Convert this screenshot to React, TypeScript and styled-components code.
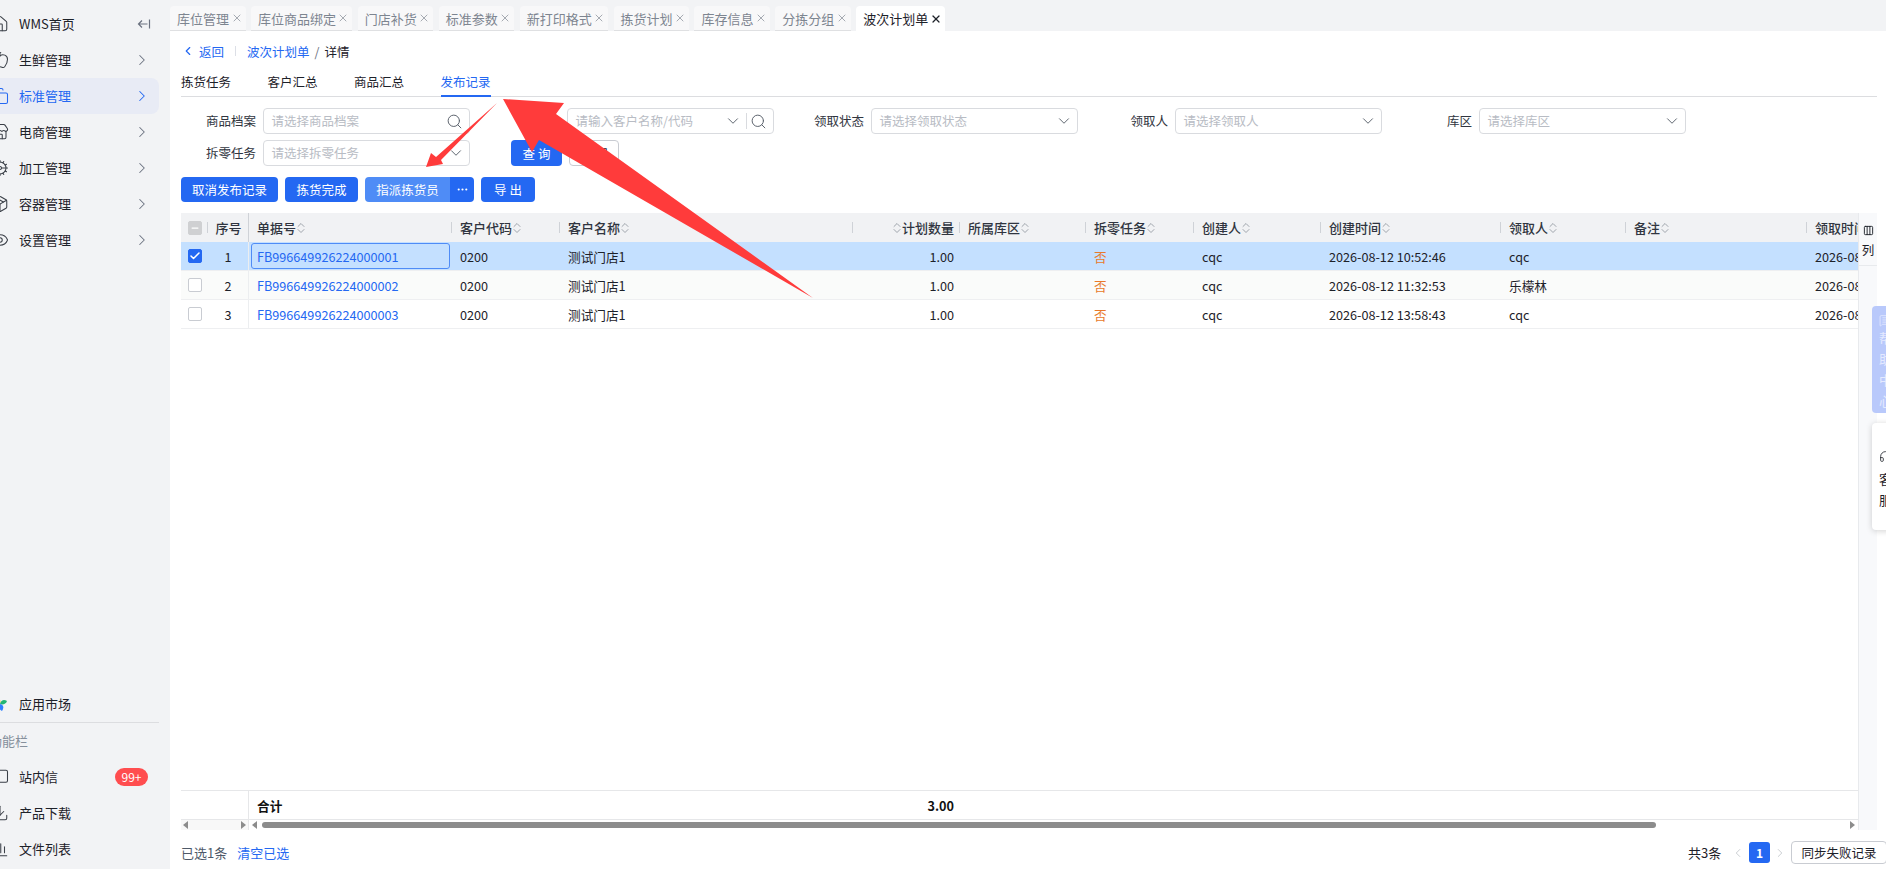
import React from "react";
import styled, { createGlobalStyle } from "styled-components";
import {
  Home, Apple, Copy, Store, Cog, Package, Eye, MessageSquare, Download, BarChart3,
  ChevronRight, ChevronLeft, ChevronDown, ChevronUp, Search, X, Check, Minus, MoreHorizontal,
  Columns3, MessageSquareText, Headphones,
} from "lucide-react";

const BLUE = "#2468f2";
const FONT = `"Noto Sans CJK SC", "Noto Sans", sans-serif`;

const Global = createGlobalStyle`
  html, body { margin: 0; padding: 0; height: 100%; overflow: hidden; background: #fff; }
  body { font-family: ${FONT}; font-size: 12px; color: #1d2129; }
  #root { height: 100%; }
  * { box-sizing: border-box; }
`;

const Shell = styled.div`
  display: flex;
  width: 1886px;
  height: 869px;
  overflow: hidden;
  position: relative;
`;

/* ---------- sidebar ---------- */
const Sidebar = styled.aside`
  width: 170px;
  flex: none;
  background: #f2f3f5;
  display: flex;
  flex-direction: column;
  justify-content: space-between;
  overflow: hidden;
`;
const MenuGroup = styled.nav`
  display: flex;
  flex-direction: column;
  padding-top: ${(p: { $top?: boolean }) => (p.$top ? "6px" : "0")};
  padding-bottom: ${(p: { $top?: boolean }) => (p.$top ? "0" : "2px")};
`;
const MenuText = styled.span`
  margin-bottom: 2px;
`;
const MenuItem = styled.div<{ $active?: boolean }>`
  width: 159px;
  height: 36px;
  display: flex;
  align-items: center;
  gap: 10px;
  font-size: 13px;
  color: ${(p) => (p.$active ? BLUE : "#1d2129")};
  background: ${(p) => (p.$active ? "#e8ebf5" : "transparent")};
  border-radius: 0 8px 8px 0;
  & > svg:first-child { margin-left: -9px; flex: none; color: ${(p) => (p.$active ? BLUE : "#3a3f47")}; }
`;
const MenuArrow = styled.span<{ $active?: boolean }>`
  margin-left: auto;
  margin-right: 8px;
  display: flex;
  color: ${(p) => (p.$active ? BLUE : "#6b7280")};
`;
const Divider = styled.div`
  width: 159px;
  height: 1px;
  background: #dcdde0;
`;
const GroupTitle = styled.div`
  height: 36px;
  display: flex;
  align-items: center;
  margin-left: -11px;
  font-size: 13px;
  color: #86909c;
`;
const Badge = styled.span`
  margin-left: auto;
  margin-right: 11px;
  width: 33px;
  height: 18px;
  border-radius: 9px;
  background: #ff4d4f;
  color: #fff;
  font-size: 12px;
  line-height: 18px;
  text-align: center;
`;

/* ---------- main ---------- */
const Main = styled.main`
  flex: 1;
  min-width: 0;
  display: flex;
  flex-direction: column;
`;
const TabBar = styled.div`
  height: 31px;
  flex: none;
  padding-top: 6px;
  background: #f2f3f5;
  display: flex;
  gap: 5.4px;
`;
const Tab = styled.div<{ $active?: boolean }>`
  height: 25px;
  padding: 0 5px 0 7px;
  display: flex;
  align-items: center;
  gap: 3.5px;
  font-size: 13px;
  border-radius: 4px 4px 0 0;
  background: ${(p) => (p.$active ? "#fff" : "#f8f8f9")};
  color: ${(p) => (p.$active ? "#1d2129" : "#7d8590")};
  border-bottom: ${(p) => (p.$active ? "none" : "1px solid #dfe0e2")};
  svg { margin: 0 -2px; color: ${(p) => (p.$active ? "#1d2129" : "#8a9099")}; }
`;
const Content = styled.div`
  flex: 1;
  min-height: 0;
  display: flex;
  flex-direction: column;
  padding: 0 9px 0 11px;
`;
const Crumbs = styled.div`
  margin-top: 8px;
  height: 24px;
  margin-bottom: 1px;
  display: flex;
  align-items: center;
  font-size: 12.5px;
  color: #1d2129;
`;
const CrumbLink = styled.span`
  color: ${BLUE};
  display: inline-flex;
  align-items: center;
`;
const CrumbSep = styled.span`
  width: 1px;
  height: 10px;
  background: #dcdfe6;
  margin: 0 11px;
`;
const Slash = styled.span`
  margin: 0 5px;
  color: #6b7280;
`;
const DetailTabs = styled.div`
  height: 33px;
  display: flex;
  gap: 36.5px;
  border-bottom: 1px solid #dcdde0;
`;
const DetailTab = styled.div<{ $active?: boolean }>`
  height: 33px;
  line-height: 36px;
  font-size: 12.5px;
  width: 50px;
  white-space: nowrap;
  color: ${(p) => (p.$active ? BLUE : "#1d2129")};
  border-bottom: 2px solid ${(p) => (p.$active ? BLUE : "transparent")};
`;
const Filters = styled.div`
  margin-top: 11px;
  display: grid;
  grid-template-columns: repeat(5, 304px);
  grid-auto-rows: 26px;
  row-gap: 6px;
`;
const Field = styled.div`
  display: grid;
  grid-template-columns: 75px 207px;
  column-gap: 7px;
  align-items: center;
`;
const FieldLabel = styled.label`
  text-align: right;
  font-size: 12.5px;
  color: #303540;
  white-space: nowrap;
  margin-bottom: 2px;
`;
const Input = styled.div`
  height: 26px;
  border: 1px solid #d9dbdf;
  border-radius: 4px;
  display: flex;
  align-items: center;
  padding: 0 8px 0 7.5px;
  background: #fff;
  color: #5c636d;
`;
const Placeholder = styled.span`
  flex: 1;
  font-size: 12.5px;
  color: #b8bcc4;
  white-space: nowrap;
  margin-bottom: 2px;
`;
const InputSep = styled.span`
  width: 1px;
  height: 16px;
  background: #d9dbdf;
  margin: 0 5px 0 8px;
`;
const SearchGlyph = styled(Search)`
  flex: none;
  margin: 0 -2px;
`;
const DownGlyph = styled(ChevronDown)`
  flex: none;
  margin: 0 -4px;
`;
const QueryCell = styled.div`
  display: flex;
  gap: 7px;
  padding-left: 26px;
`;
const Btn = styled.button<{ $w?: number; $light?: boolean; $ghost?: boolean; $square?: string }>`
  width: ${(p) => (p.$w ? `${p.$w}px` : "auto")};
  height: 100%;
  border: ${(p) => (p.$ghost ? "1px solid #c9ccd2" : "none")};
  border-radius: ${(p) => p.$square ?? "4px"};
  background: ${(p) => (p.$ghost ? "#fff" : p.$light ? "#4f8cf6" : BLUE)};
  color: ${(p) => (p.$ghost ? "#1d2129" : "#fff")};
  font: 12.5px ${FONT};
  padding: 0;
  display: inline-flex;
  align-items: center;
  justify-content: center;
`;
const Actions = styled.div`
  margin-top: 11px;
  height: 25px;
  display: flex;
  gap: 7px;
`;
const SplitBtn = styled.div`
  display: flex;
`;
const TableWrap = styled.div`
  margin-top: 11px;
  flex: 1;
  min-height: 0;
  display: flex;
`;
const Table = styled.div`
  flex: 1;
  min-width: 0;
  display: flex;
  flex-direction: column;
  overflow: hidden;
`;
const COLS = "27px 41px 203px 108px 293px 107px 126px 108px 127px 180px 125px 181px 180px";
const HeadRow = styled.div`
  height: 29px;
  flex: none;
  display: grid;
  grid-template-columns: ${COLS};
  background: #f1f2f4;
  font-weight: 500;
`;
const HeadCell = styled.div<{ $end?: boolean; $noSep?: boolean; $pin?: boolean }>`
  position: relative;
  display: flex;
  align-items: center;
  justify-content: ${(p) => (p.$end ? "flex-end" : "flex-start")};
  padding: ${(p) => (p.$end ? "0 6px 0 0" : "0 0 0 8px")};
  font-size: 13px;
  white-space: nowrap;
  color: #303540;
  &::before {
    content: "";
    display: ${(p) => (p.$noSep ? "none" : "block")};
    position: absolute;
    left: -1px;
    top: ${(p) => (p.$pin ? "0" : "9px")};
    bottom: ${(p) => (p.$pin ? "0" : "9px")};
    width: 1px;
    background: #cfd2d7;
  }
`;
const SortIcon = styled.span`
  display: inline-flex;
  flex-direction: column;
  margin: 0 -1px;
  color: #8a9099;
  svg { display: block; margin: -3px 0; }
`;
const SeqHead = styled(HeadCell)`
  padding: 0;
  justify-content: center;
`;
const CheckCell = styled.div`
  display: flex;
  align-items: center;
  justify-content: flex-start;
  padding-left: 7px;
`;
const Box = styled.span<{ $kind: "on" | "off" | "mixed" }>`
  width: 14px;
  height: 14px;
  border-radius: 2px;
  display: inline-flex;
  align-items: center;
  justify-content: center;
  color: #fff;
  background: ${(p) => (p.$kind === "on" ? BLUE : p.$kind === "mixed" ? "#cfd0d2" : "#fff")};
  border: 1px solid ${(p) => (p.$kind === "on" ? BLUE : p.$kind === "mixed" ? "#cfd0d2" : "#c9ccd2")};
`;
const Row = styled.div<{ $sel?: boolean; $alt?: boolean }>`
  height: 29px;
  flex: none;
  display: grid;
  grid-template-columns: ${COLS};
  background: ${(p) => (p.$sel ? "#c4e0ff" : p.$alt ? "#fafbfa" : "#fff")};
  border-bottom: 1px solid #eeeff1;
  font-size: 12.65px;
  color: #1d2129;
`;
const Cell = styled.div<{ $end?: boolean; $center?: boolean; $line?: boolean }>`
  display: flex;
  align-items: center;
  justify-content: ${(p) => (p.$end ? "flex-end" : p.$center ? "center" : "flex-start")};
  padding: ${(p) => (p.$end ? "0 6px 0 0" : p.$center ? "0" : "0 0 0 8px")};
  white-space: nowrap;
  overflow: hidden;
`;
const SeqCell = styled(Cell)`
  border-right: 1px solid #eceef0;
`;
const LinkCell = styled(Cell)<{ $focus?: boolean }>`
  color: ${BLUE};
  margin: 1px 2px 1px 2px;
  padding-left: 5px;
  border: 1px solid ${(p) => (p.$focus ? "#4f8cf6" : "transparent")};
  border-radius: 3px;
`;
const NoCell = styled(Cell)`
  color: #e8792b;
`;
const Spacer = styled.div`
  flex: 1;
`;
const TotalRow = styled.div`
  height: 30px;
  flex: none;
  display: grid;
  grid-template-columns: ${COLS};
  border-top: 1px solid #e6e7e9;
  border-bottom: 1px solid #e6e7e9;
  font-weight: 700;
  font-size: 12.65px;
  color: #111;
`;
const TotalPin = styled.div`
  grid-column: 1 / span 2;
  border-right: 1px solid #e6e7e9;
`;
const ScrollRow = styled.div`
  height: 10px;
  flex: none;
  display: flex;
  align-items: center;
  color: #8c8c8c;
`;
const ScrollPin = styled.div`
  width: 68px;
  height: 10px;
  flex: none;
  display: flex;
  align-items: center;
  justify-content: space-between;
  background: #f8f8f8;
  border-right: 1px solid #e6e7e9;
  padding: 0 2px;
`;
const ScrollMain = styled.div`
  flex: 1;
  height: 10px;
  display: flex;
  align-items: center;
  padding: 0 3px;
  gap: 5px;
`;
const Thumb = styled.div`
  height: 6px;
  width: 1394px;
  border-radius: 3px;
  background: #8c8c8c;
`;
const Tri = styled.span<{ $right?: boolean }>`
  width: 0;
  height: 0;
  border-top: 4px solid transparent;
  border-bottom: 4px solid transparent;
  ${(p) => (p.$right ? "border-left: 5px solid #8c8c8c;" : "border-right: 5px solid #8c8c8c;")}
`;
const TriEnd = styled(Tri)`
  margin-left: auto;
`;
const ColStrip = styled.div`
  width: 19px;
  flex: none;
  height: 617px;
  background: #f8f9fb;
  border-left: 1px solid #e8eaed;
`;
const ColBtn = styled.div`
  height: 53px;
  border-bottom: 1px solid #e8eaed;
  display: flex;
  flex-direction: column;
  align-items: center;
  padding-top: 12px;
  gap: 4px;
  font-size: 12.5px;
  color: #1d2129;
`;
const Footer = styled.div`
  height: 39px;
  flex: none;
  padding-top: 6px;
  display: flex;
  align-items: center;
  font-size: 13px;
  color: #4e5969;
`;
const ClearLink = styled.span`
  color: ${BLUE};
  margin-left: 10px;
`;
const Pager = styled.div`
  margin-left: auto;
  margin-right: -9px;
  width: 198px;
  display: flex;
  align-items: center;
  overflow: hidden;
  color: #1d2129;
`;
const PagerTotal = styled.span`
  width: 43px;
  flex: none;
`;
const PagerArrow = styled.span`
  width: 18px;
  flex: none;
  display: flex;
  color: #c4c7cc;
`;
const PageNum = styled.span`
  width: 21px;
  height: 21px;
  flex: none;
  border-radius: 3px;
  background: ${BLUE};
  color: #fff;
  font-weight: 700;
  font-size: 12px;
  display: flex;
  align-items: center;
  justify-content: center;
  margin-right: 3px;
`;
const SyncBtn = styled.button`
  width: 96px;
  height: 23px;
  flex: none;
  border: 1px solid #c9ccd2;
  border-radius: 4px;
  background: #fff;
  font: 12.5px ${FONT};
  color: #1d2129;
  padding: 0;
`;

/* ---------- floating pieces ---------- */
const HelpFloat = styled.div`
  position: absolute;
  left: 1872px;
  top: 306px;
  width: 30px;
  height: 107px;
  border-radius: 4px;
  background: #b9c9fb;
  color: #e4eaff;
  font-size: 13px;
  padding: 8px 0 0 7px;
  display: flex;
  flex-direction: column;
  gap: 1px;
  line-height: 20px;
`;
const ServiceFloat = styled.div`
  position: absolute;
  left: 1872px;
  top: 423px;
  width: 30px;
  height: 107px;
  border-radius: 4px;
  background: #fff;
  box-shadow: 0 1px 6px rgba(0, 0, 0, 0.18);
  color: #1d2129;
  font-size: 13px;
  padding: 27px 0 0 7px;
  display: flex;
  flex-direction: column;
  gap: 1px;
  line-height: 20px;
  svg { margin-bottom: 5px; }
`;
const Annotation = styled.svg`
  position: absolute;
  left: 0;
  top: 0;
  pointer-events: none;
`;

const Sort = () => (
  <SortIcon>
    <ChevronUp size={12} strokeWidth={1.6} />
    <ChevronDown size={12} strokeWidth={1.6} />
  </SortIcon>
);

const Flower = () => (
  <svg width="18" height="18" viewBox="0 0 18 18">
    <path d="M9 9C5 8 4 5 6 2c3 1 4 4 3 7z" fill="#f7b500" />
    <path d="M9 9c1-4 4-5 7-3-1 3-4 4-7 3z" fill="#22b573" />
    <path d="M9 9c4 1 4 4 2 7-3-1-3-4-2-7z" fill="#2f80ff" />
    <path d="M9 9c-1 4-3 5-6 4 0-3 3-5 6-4z" fill="#39c3f0" />
  </svg>
);

const CollapseGlyph = () => (
  <svg width="14" height="14" viewBox="0 0 14 14" fill="none" stroke="currentColor" strokeWidth="1.2">
    <path d="M1.5 7H10.5M5 3.5 1.5 7 5 10.5M12.5 2.5v9" />
  </svg>
);

const topMenu: { t: string; I: any; active?: boolean }[] = [
  { t: "生鲜管理", I: Apple },
  { t: "标准管理", I: Copy, active: true },
  { t: "电商管理", I: Store },
  { t: "加工管理", I: Cog },
  { t: "容器管理", I: Package },
  { t: "设置管理", I: Eye },
];

const tabs = ["库位管理", "库位商品绑定", "门店补货", "标准参数", "新打印格式", "拣货计划", "库存信息", "分拣分组"];

const rows = [
  { no: "FB996649926224000001", time: "2026-08-12 10:52:46", who: "cqc", take: "2026-08-12 10:53:10" },
  { no: "FB996649926224000002", time: "2026-08-12 11:32:53", who: "乐檬林", take: "2026-08-12 11:33:10" },
  { no: "FB996649926224000003", time: "2026-08-12 13:58:43", who: "cqc", take: "2026-08-12 13:59:10" },
];

const heads: { t: string; sortFirst?: boolean; end?: boolean }[] = [
  { t: "单据号" },
  { t: "客户代码" },
  { t: "客户名称" },
  { t: "计划数量", sortFirst: true, end: true },
  { t: "所属库区" },
  { t: "拆零任务" },
  { t: "创建人" },
  { t: "创建时间" },
  { t: "领取人" },
  { t: "备注" },
  { t: "领取时间" },
];

export default function App() {
  return (
    <Shell>
      <Global />
      <Sidebar>
        <MenuGroup $top>
          <MenuItem>
            <Home size={18} strokeWidth={1.4} />
            <MenuText>WMS首页</MenuText>
            <MenuArrow><CollapseGlyph /></MenuArrow>
          </MenuItem>
          {topMenu.map(({ t, I, active }) => (
            <MenuItem key={t} $active={active}>
              <I size={18} strokeWidth={1.4} />
              <MenuText>{t}</MenuText>
              <MenuArrow $active={active}><ChevronRight size={18} strokeWidth={1.4} /></MenuArrow>
            </MenuItem>
          ))}
        </MenuGroup>
        <MenuGroup>
          <MenuItem><Flower /><MenuText>应用市场</MenuText></MenuItem>
          <Divider />
          <GroupTitle><MenuText>功能栏</MenuText></GroupTitle>
          <MenuItem><MessageSquare size={18} strokeWidth={1.4} /><MenuText>站内信</MenuText><Badge>99+</Badge></MenuItem>
          <MenuItem><Download size={18} strokeWidth={1.4} /><MenuText>产品下载</MenuText></MenuItem>
          <MenuItem><BarChart3 size={18} strokeWidth={1.4} /><MenuText>文件列表</MenuText></MenuItem>
        </MenuGroup>
      </Sidebar>

      <Main>
        <TabBar>
          {tabs.map((t) => (
            <Tab key={t}>{t}<X size={12} strokeWidth={1.5} /></Tab>
          ))}
          <Tab $active>波次计划单<X size={12} strokeWidth={2.4} /></Tab>
        </TabBar>
        <Content>
          <Crumbs>
            <CrumbLink><ChevronLeft size={14} strokeWidth={2} style={{ marginRight: 4 }} />返回</CrumbLink>
            <CrumbSep />
            <CrumbLink>波次计划单</CrumbLink>
            <Slash>/</Slash>
            详情
          </Crumbs>
          <DetailTabs>
            <DetailTab>拣货任务</DetailTab>
            <DetailTab>客户汇总</DetailTab>
            <DetailTab>商品汇总</DetailTab>
            <DetailTab $active>发布记录</DetailTab>
          </DetailTabs>
          <Filters>
            <Field>
              <FieldLabel>商品档案</FieldLabel>
              <Input><Placeholder>请选择商品档案</Placeholder><SearchGlyph size={17} strokeWidth={1.4} /></Input>
            </Field>
            <Field>
              <FieldLabel>客户</FieldLabel>
              <Input>
                <Placeholder>请输入客户名称/代码</Placeholder>
                <DownGlyph size={18} strokeWidth={1.3} />
                <InputSep />
                <SearchGlyph size={17} strokeWidth={1.4} />
              </Input>
            </Field>
            <Field>
              <FieldLabel>领取状态</FieldLabel>
              <Input><Placeholder>请选择领取状态</Placeholder><DownGlyph size={18} strokeWidth={1.3} /></Input>
            </Field>
            <Field>
              <FieldLabel>领取人</FieldLabel>
              <Input><Placeholder>请选择领取人</Placeholder><DownGlyph size={18} strokeWidth={1.3} /></Input>
            </Field>
            <Field>
              <FieldLabel>库区</FieldLabel>
              <Input><Placeholder>请选择库区</Placeholder><DownGlyph size={18} strokeWidth={1.3} /></Input>
            </Field>
            <Field>
              <FieldLabel>拆零任务</FieldLabel>
              <Input><Placeholder>请选择拆零任务</Placeholder><DownGlyph size={18} strokeWidth={1.3} /></Input>
            </Field>
            <QueryCell>
              <Btn $w={51}>查 询</Btn>
              <Btn $w={50} $ghost>重 置</Btn>
            </QueryCell>
          </Filters>
          <Actions>
            <Btn $w={97}>取消发布记录</Btn>
            <Btn $w={73}>拣货完成</Btn>
            <SplitBtn>
              <Btn $w={85} $light $square="4px 0 0 4px">指派拣货员</Btn>
              <Btn $w={24} $square="0 4px 4px 0"><MoreHorizontal size={13} /></Btn>
            </SplitBtn>
            <Btn $w={54}>导 出</Btn>
          </Actions>
          <TableWrap>
            <Table>
              <HeadRow>
                <CheckCell><Box $kind="mixed"><Minus size={10} strokeWidth={3} /></Box></CheckCell>
                <SeqHead>序号</SeqHead>
                {heads.map((h, i) => (
                  <HeadCell key={h.t} $end={h.end} $pin={i === 0}>
                    {h.sortFirst && <Sort />}
                    {h.t}
                    {!h.sortFirst && <Sort />}
                  </HeadCell>
                ))}
              </HeadRow>
              {rows.map((r, i) => (
                <Row key={r.no} $sel={i === 0} $alt={i === 1}>
                  <CheckCell>
                    <Box $kind={i === 0 ? "on" : "off"}>{i === 0 && <Check size={12} strokeWidth={3} />}</Box>
                  </CheckCell>
                  <SeqCell $center>{i + 1}</SeqCell>
                  <LinkCell $focus={i === 0}>{r.no}</LinkCell>
                  <Cell>0200</Cell>
                  <Cell>测试门店1</Cell>
                  <Cell $end>1.00</Cell>
                  <Cell />
                  <NoCell>否</NoCell>
                  <Cell>cqc</Cell>
                  <Cell>{r.time}</Cell>
                  <Cell>{r.who}</Cell>
                  <Cell />
                  <Cell>{r.take}</Cell>
                </Row>
              ))}
              <Spacer />
              <TotalRow>
                <TotalPin />
                <Cell>合计</Cell>
                <Cell />
                <Cell />
                <Cell $end>3.00</Cell>
              </TotalRow>
              <ScrollRow>
                <ScrollPin><Tri /><Tri $right /></ScrollPin>
                <ScrollMain><Tri /><Thumb /><TriEnd $right /></ScrollMain>
              </ScrollRow>
            </Table>
            <ColStrip>
              <ColBtn><Columns3 size={11} strokeWidth={2} />列</ColBtn>
            </ColStrip>
          </TableWrap>
          <Footer>
            已选1条<ClearLink>清空已选</ClearLink>
            <Pager>
              <PagerTotal>共3条</PagerTotal>
              <PagerArrow><ChevronLeft size={14} strokeWidth={1.5} /></PagerArrow>
              <PageNum>1</PageNum>
              <PagerArrow><ChevronRight size={14} strokeWidth={1.5} /></PagerArrow>
              <SyncBtn>同步失败记录</SyncBtn>
            </Pager>
          </Footer>
        </Content>
      </Main>

      <HelpFloat>
        <MessageSquareText size={13} strokeWidth={1.5} />
        <span>帮</span><span>助</span><span>中</span><span>心</span>
      </HelpFloat>
      <ServiceFloat>
        <Headphones size={13} strokeWidth={1.5} />
        <span>客</span><span>服</span>
      </ServiceFloat>

      <Annotation width="1886" height="869" viewBox="0 0 1886 869">
        <polygon points="503,99 564,103 556,114 813,298 539,140 532,152" fill="#ff3b3b" />
        <polygon points="426,167 431,153 436,157 497,103 441,160 443,164" fill="#ff3b3b" />
      </Annotation>
    </Shell>
  );
}
